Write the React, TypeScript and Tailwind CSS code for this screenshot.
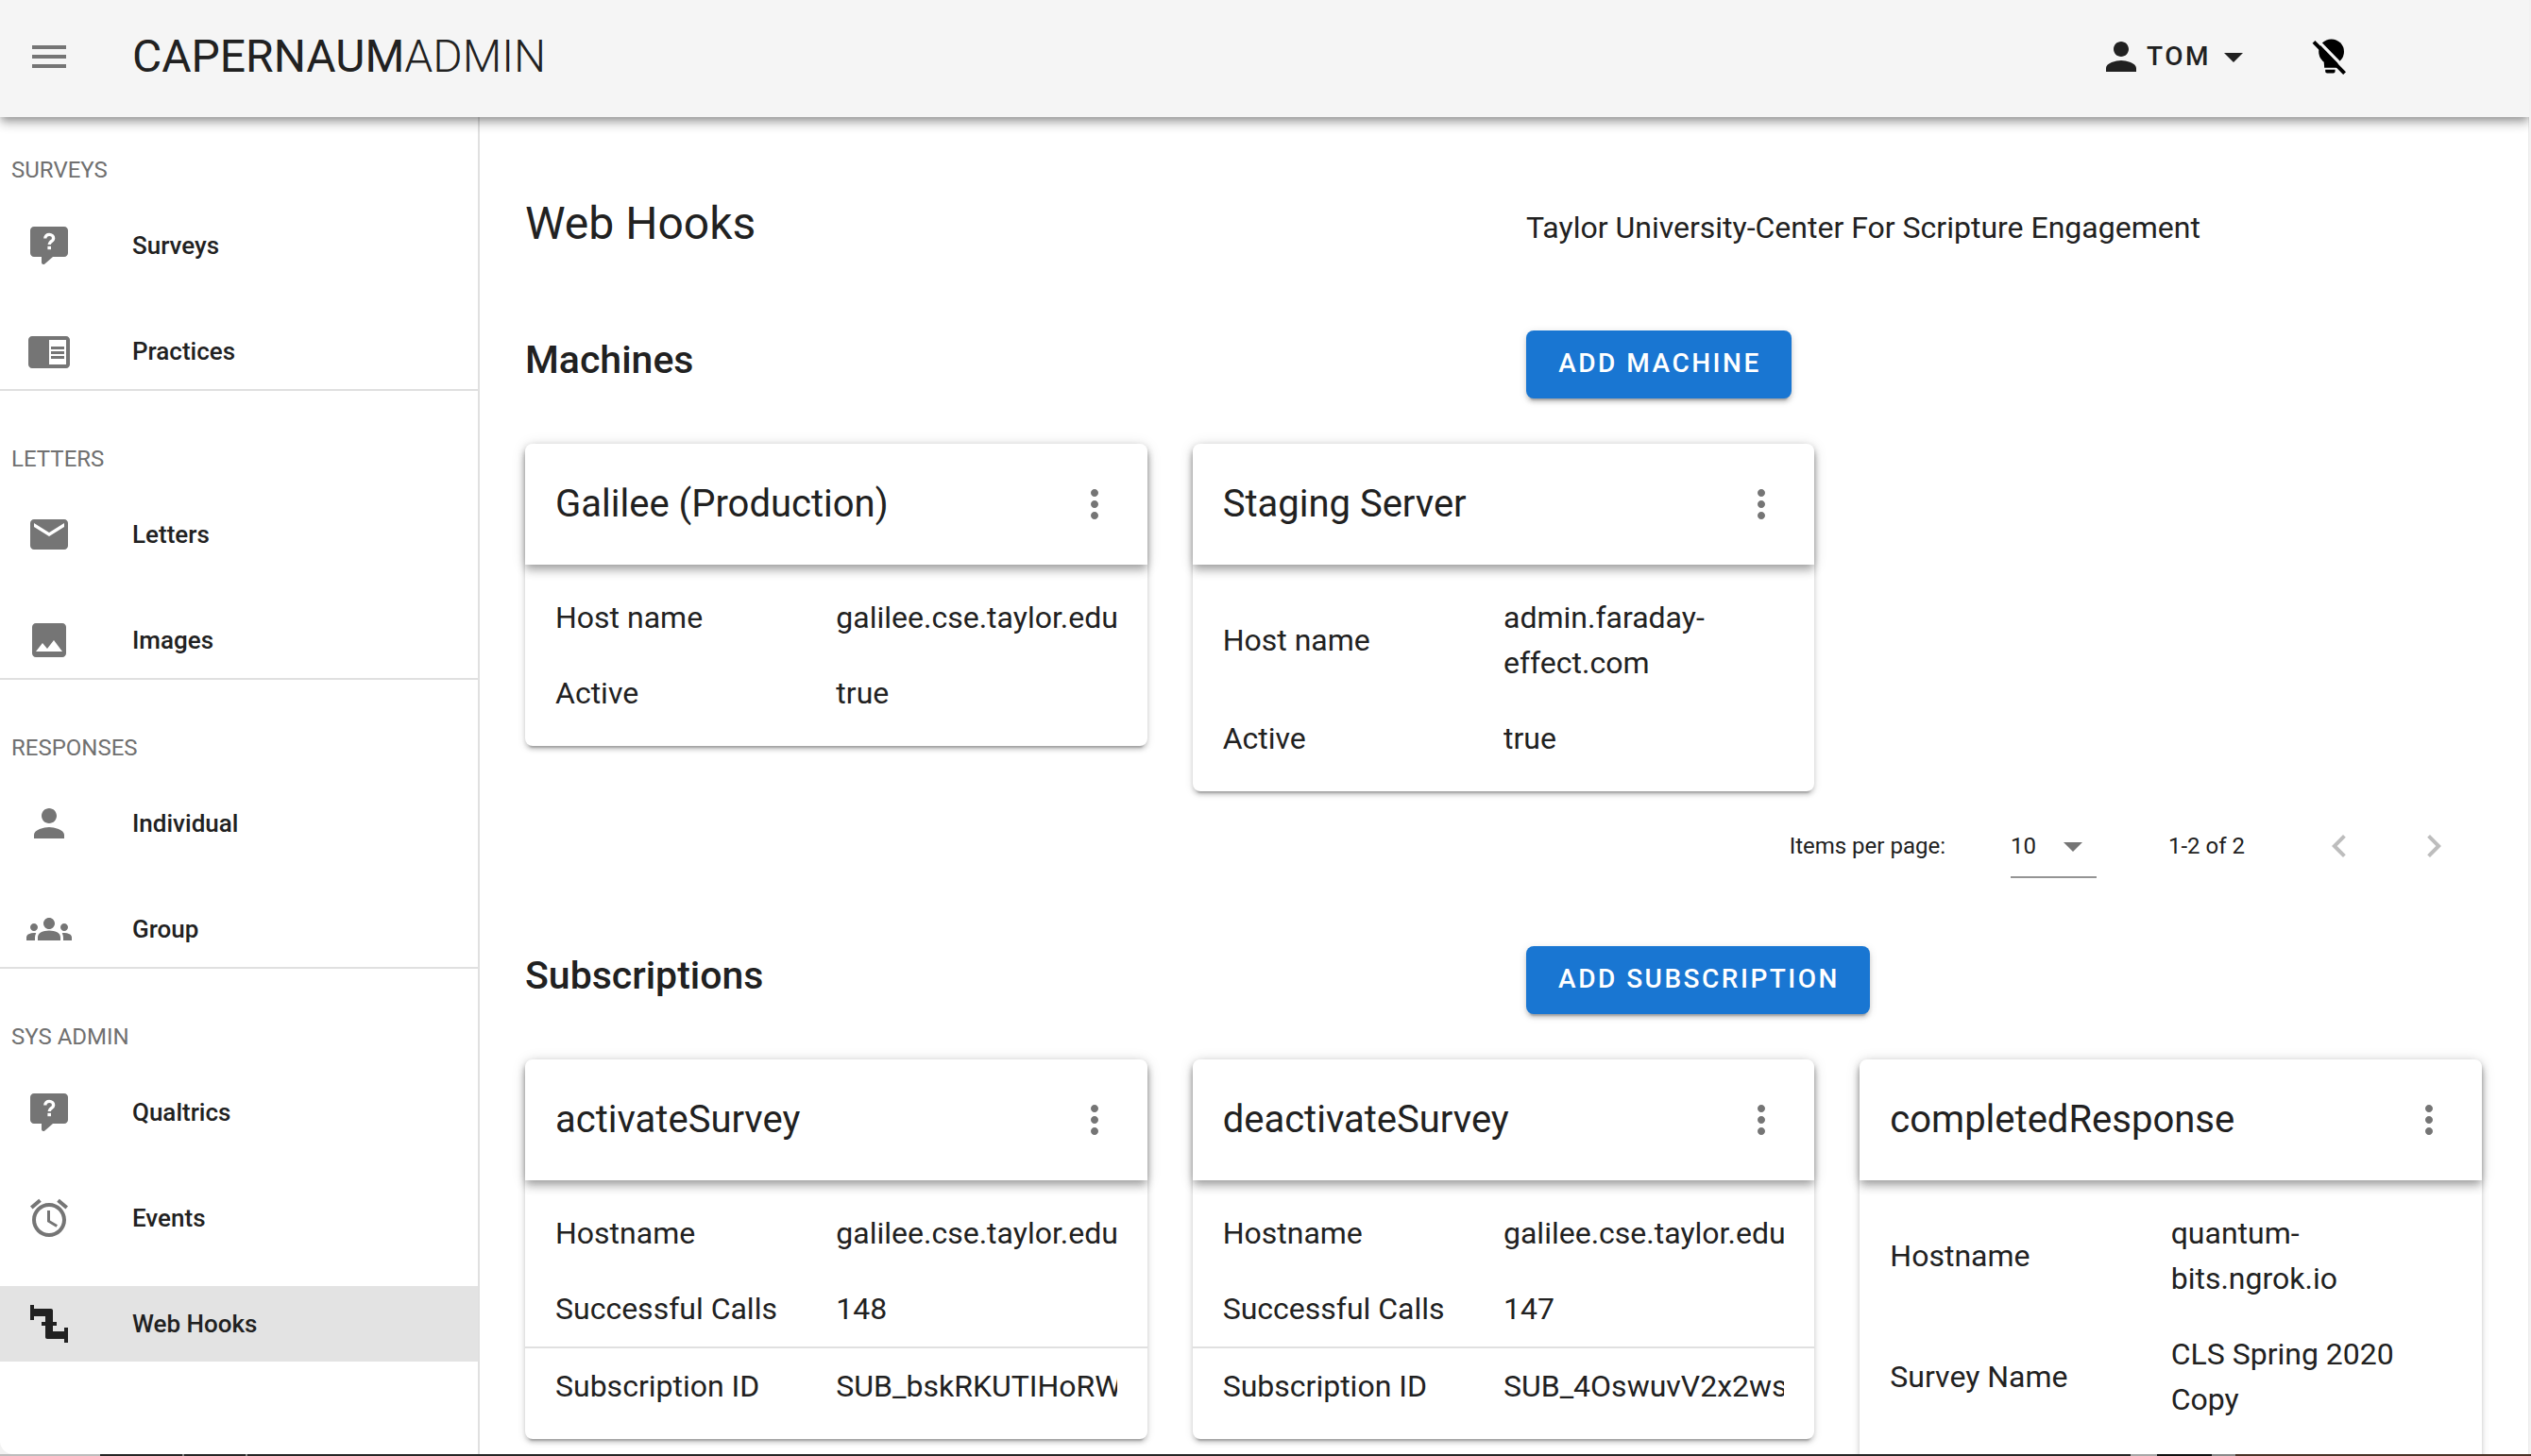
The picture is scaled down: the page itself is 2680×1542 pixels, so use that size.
import type { ReactNode } from "react";

const Icon = ({ d, className = "fill-[#757575]" }: { d: string; className?: string }) => (
  <svg viewBox="0 0 24 24" className={`w-12 h-12 shrink-0 ${className}`}>
    <path d={d} />
  </svg>
);

const paths = {
  menu: "M3 18h18v-2H3v2zm0-5h18v-2H3v2zm0-7v2h18V6H3z",
  practices:
    "M13 12h7v1.5h-7zm0-2.5h7V11h-7zm0 5h7V16h-7zM21 4H3c-1.1 0-2 .9-2 2v13c0 1.1.9 2 2 2h18c1.1 0 2-.9 2-2V6c0-1.1-.9-2-2-2zm0 15h-9V6h9v13z",
  email:
    "M20 4H4c-1.1 0-1.99.9-1.99 2L2 18c0 1.1.9 2 2 2h16c1.1 0 2-.9 2-2V6c0-1.1-.9-2-2-2zm0 4l-8 5-8-5V6l8 5 8-5v2z",
  image:
    "M21 19V5c0-1.1-.9-2-2-2H5c-1.1 0-2 .9-2 2v14c0 1.1.9 2 2 2h14c1.1 0 2-.9 2-2zM8.5 13.5l2.5 3.01L14.5 12l4.5 6H5l3.5-4.5z",
  person:
    "M12 12c2.21 0 4-1.79 4-4s-1.79-4-4-4-4 1.79-4 4 1.79 4 4 4zm0 2c-2.67 0-8 1.34-8 4v2h16v-2c0-2.66-5.33-4-8-4z",
  groups:
    "M12 12.75c1.63 0 3.07.39 4.24.9 1.08.48 1.76 1.56 1.76 2.73V18H6v-1.61c0-1.18.68-2.26 1.76-2.73 1.17-.52 2.61-.91 4.24-.91zM4 13c1.1 0 2-.9 2-2s-.9-2-2-2-2 .9-2 2 .9 2 2 2zm1.13 1.1c-.37-.06-.74-.1-1.13-.1-.99 0-1.93.21-2.78.58C.48 14.9 0 15.62 0 16.43V18h4.5v-1.61c0-.83.23-1.61.63-2.29zM20 13c1.1 0 2-.9 2-2s-.9-2-2-2-2 .9-2 2 .9 2 2 2zm4 3.43c0-.81-.48-1.53-1.22-1.85-.85-.37-1.79-.58-2.78-.58-.39 0-.76.04-1.13.1.4.68.63 1.46.63 2.29V18H24v-1.57zM12 6c1.66 0 3 1.34 3 3s-1.34 3-3 3-3-1.34-3-3 1.34-3 3-3z",
  alarm:
    "M22 5.72l-4.6-3.86-1.29 1.53 4.6 3.86L22 5.72zM7.88 3.39L6.6 1.86 2 5.71l1.29 1.53 4.59-3.85zM12.5 8H11v6l4.75 2.85.75-1.23-4-2.37V8zM12 4c-4.97 0-9 4.03-9 9s4.03 9 9 9c4.97 0 9-4.03 9-9s-4.03-9-9-9zm0 16c-3.87 0-7-3.13-7-7s3.13-7 7-7 7 3.13 7 7-3.13 7-7 7z",
  pipe: "M2 2h2v2h9c.6 0 1 .4 1 1v6h2v2h-2v3h6v-2h2v8h-2v-2h-9c-.6 0-1-.4-1-1v-6H8v-2h2V8H4v2H2V2z",
  more: "M12 8c1.1 0 2-.9 2-2s-.9-2-2-2-2 .9-2 2 .9 2 2 2zm0 2c-1.1 0-2 .9-2 2s.9 2 2 2 2-.9 2-2-.9-2-2-2zm0 6c-1.1 0-2 .9-2 2s.9 2 2 2 2-.9 2-2-.9-2-2-2z",
  caret: "M7 10l5 5 5-5z",
  prev: "M15.41 7.41L14 6l-6 6 6 6 1.41-1.41L10.83 12z",
  next: "M10 6L8.59 7.41 13.17 12l-4.58 4.59L10 18l6-6z",
};

const SurveyIcon = () => (
  <svg viewBox="0 0 24 24" className="w-12 h-12 shrink-0">
    <path
      className="fill-[#757575]"
      d="M4 2h16c1.1 0 2 .9 2 2v12c0 1.1-.9 2-2 2h-6l-4.3 3.7c-.6.5-1.7.3-1.7-.7v-3H4c-1.1 0-2-.9-2-2V4c0-1.1.9-2 2-2z"
    />
    <path d="M9.9 8.3c0-1.4 1-2.1 2.2-2.1s2.2.8 2.2 2c0 1.7-2.2 1.6-2.2 3.3" fill="none" stroke="#fff" strokeWidth="1.7" />
    <path d="M11.2 12.4h1.8v1.7h-1.8z" fill="#fff" />
  </svg>
);

// light bulb with a slash, no matching icon in the packages
const BulbOff = () => (
  <svg viewBox="0 0 24 24" className="w-12 h-12 shrink-0">
    <circle cx="12.8" cy="9.4" r="6.7" fill="#000" />
    <path d="M8.8 14h7.6l-.3 3.9H9.1z" fill="#000" />
    <path d="M9.6 18.9h5.2v.9c0 .6-.4 1-1 1h-3.2c-.6 0-1-.4-1-1z" fill="#000" />
    <path d="M5 2.8l15.6 16" stroke="#f5f5f5" strokeWidth="1.6" fill="none" />
    <path d="M3.5 4.2l16.3 16.6" stroke="#000" strokeWidth="2" fill="none" />
  </svg>
);

const navSections: { title: string; items: { label: string; icon: ReactNode; active?: boolean }[] }[] = [
  {
    title: "SURVEYS",
    items: [
      { label: "Surveys", icon: <SurveyIcon /> },
      { label: "Practices", icon: <Icon d={paths.practices} /> },
    ],
  },
  {
    title: "LETTERS",
    items: [
      { label: "Letters", icon: <Icon d={paths.email} /> },
      { label: "Images", icon: <Icon d={paths.image} /> },
    ],
  },
  {
    title: "RESPONSES",
    items: [
      { label: "Individual", icon: <Icon d={paths.person} /> },
      { label: "Group", icon: <Icon d={paths.groups} /> },
    ],
  },
  {
    title: "SYS ADMIN",
    items: [
      { label: "Qualtrics", icon: <SurveyIcon /> },
      { label: "Events", icon: <Icon d={paths.alarm} /> },
      { label: "Web Hooks", icon: <Icon d={paths.pipe} className="fill-[#212121]" />, active: true },
    ],
  },
];

const Sidebar = () => (
  <aside className="w-[508px] shrink-0 border-r-2 border-[#e0e0e0]">
    {navSections.map((section, i) => (
      <div
        key={section.title}
        className={`${i === 0 ? "pt-[32px]" : "pt-[48px]"} ${i < 3 ? "border-b-2 border-[#e0e0e0]" : ""}`}
      >
        <div className="h-12 flex items-center pl-3 text-[24px] text-[#707070]">{section.title}</div>
        <div className="mt-4 flex flex-col gap-8">
          {section.items.map((item) => (
            <div
              key={item.label}
              className={`h-20 flex items-center pl-7 gap-[64px] text-[26px] font-medium text-[#212121] ${
                item.active ? "bg-[#e3e3e3]" : ""
              }`}
            >
              {item.icon}
              <span>{item.label}</span>
            </div>
          ))}
        </div>
      </div>
    ))}
  </aside>
);

type Row = { label: string; value: string; divider?: boolean };

const Card = ({ title, rows, extra }: { title: string; rows: Row[]; extra?: boolean }) => (
  <div className="bg-white rounded-lg shadow-[0_6px_2px_-4px_rgba(0,0,0,0.2),0_4px_4px_0_rgba(0,0,0,0.14),0_2px_10px_0_rgba(0,0,0,0.12)]">
    <div className="h-32 pl-8 pr-8 flex items-center justify-between bg-white rounded-t-lg shadow-[0_4px_8px_-2px_rgba(0,0,0,0.25),0_8px_10px_0_rgba(0,0,0,0.14),0_2px_16px_0_rgba(0,0,0,0.12)]">
      <span className="text-[40px] text-[#212121]">{title}</span>
      <Icon d={paths.more} />
    </div>
    <div className={`pt-4 ${extra ? "pb-[120px]" : "pb-4"}`}>
      {rows.map((row) => (
        <div
          key={row.label}
          className={`${row.divider ? "border-t-2 border-[#e0e0e0]" : ""} px-8 py-4 grid grid-cols-2 items-center text-[32px] leading-[48px] text-[#212121]`}
        >
          <span>{row.label}</span>
          <span className="overflow-hidden">{row.value}</span>
        </div>
      ))}
    </div>
  </div>
);

const SectionHead = ({ title, button, width }: { title: string; button: string; width: string }) => (
  <div className="grid grid-cols-2 gap-12">
    <h2 className="h-[64px] flex items-center text-[41px] font-medium text-[#212121]">{title}</h2>
    <div>
      <button
        className={`${width} h-[72px] pl-[2px] pb-[2px] rounded-lg bg-[#1976d2] text-white text-[28px] font-medium tracking-[2.5px] shadow-[0_6px_2px_-4px_rgba(0,0,0,0.2),0_4px_4px_0_rgba(0,0,0,0.14),0_2px_10px_0_rgba(0,0,0,0.12)]`}
      >
        {button}
      </button>
    </div>
  </div>
);

const Paginator = () => (
  <div className="mt-[18px] h-20 flex items-center justify-end text-[24px] text-[#212121] pr-[11px]">
    <span>Items per page:</span>
    <div className="relative ml-[69px] w-[91px] h-20 flex items-center">
      <span>10</span>
      <svg viewBox="0 0 24 24" className="w-12 h-12 absolute left-[42px] top-[16px] fill-[#757575]">
        <path d={paths.caret} />
      </svg>
      <div className="absolute left-0 right-0 top-[72px] h-[2px] bg-[#949494]" />
    </div>
    <span className="ml-[76px]">1-2 of 2</span>
    <div className="ml-[60px] w-20 flex justify-center">
      <Icon d={paths.prev} className="fill-[#bdbdbd]" />
    </div>
    <div className="ml-[20px] w-20 flex justify-center">
      <Icon d={paths.next} className="fill-[#bdbdbd]" />
    </div>
  </div>
);

export default function App() {
  return (
    <div className="w-[2680px] h-[1542px] overflow-hidden bg-[#f2f2f2] flex flex-col font-['Roboto',sans-serif]">
      <div className="w-[2678px] h-[1540px] shrink-0 bg-white rounded-bl-[14px] overflow-hidden flex flex-col">
        <header className="relative z-10 h-[124px] shrink-0 bg-[#f5f5f5] flex items-center pl-7 pb-1 pr-[187px] shadow-[0_4px_8px_-2px_rgba(0,0,0,0.3),0_8px_10px_0_rgba(0,0,0,0.14),0_2px_16px_0_rgba(0,0,0,0.12)]">
          <Icon d={paths.menu} />
          <div className="ml-[64px] text-[48px] text-[#212121]">
            CAPERNAUM<span className="font-light">ADMIN</span>
          </div>
          <div className="ml-auto flex items-center text-[28px] font-medium tracking-[2.5px] text-[#212121]">
            <Icon d={paths.person} className="fill-[#212121]" />
            <span className="ml-[3px]">TOM</span>
            <Icon d={paths.caret} className="fill-[#212121]" />
          </div>
          <div className="ml-[54px]">
            <BulbOff />
          </div>
        </header>

        <div className="flex flex-1 min-h-0">
          <Sidebar />
          <main className="flex-1 overflow-hidden pl-12 pr-[49px] border-r border-[#ececec]">
            <div className="mt-[77px] grid grid-cols-2 gap-12">
              <h1 className="h-[72px] flex items-center text-[48px] text-[#212121]">Web Hooks</h1>
              <div className="h-[72px] pt-2 flex items-center text-[32px] text-[#212121]">
                Taylor University-Center For Scripture Engagement
              </div>
            </div>

            <div className="mt-[77px]">
              <SectionHead title="Machines" button="ADD MACHINE" width="w-[281px]" />
            </div>
            <div className="mt-12 grid grid-cols-3 gap-12 items-start">
              <Card
                title="Galilee (Production)"
                rows={[
                  { label: "Host name", value: "galilee.cse.taylor.edu" },
                  { label: "Active", value: "true" },
                ]}
              />
              <Card
                title="Staging Server"
                rows={[
                  { label: "Host name", value: "admin.faraday-effect.com" },
                  { label: "Active", value: "true" },
                ]}
              />
            </div>

            <Paginator />

            <div className="mt-[66px]">
              <SectionHead title="Subscriptions" button="ADD SUBSCRIPTION" width="w-[364px]" />
            </div>
            <div className="mt-12 grid grid-cols-3 gap-12 items-start">
              <Card
                title="activateSurvey"
                rows={[
                  { label: "Hostname", value: "galilee.cse.taylor.edu" },
                  { label: "Successful Calls", value: "148" },
                  { label: "Subscription ID", value: "SUB_bskRKUTIHoRWxTqz", divider: true },
                ]}
              />
              <Card
                title="deactivateSurvey"
                rows={[
                  { label: "Hostname", value: "galilee.cse.taylor.edu" },
                  { label: "Successful Calls", value: "147" },
                  { label: "Subscription ID", value: "SUB_4OswuvV2x2wsRkLm", divider: true },
                ]}
              />
              <Card
                title="completedResponse"
                extra
                rows={[
                  { label: "Hostname", value: "quantum-bits.ngrok.io" },
                  { label: "Survey Name", value: "CLS Spring 2020 Copy" },
                ]}
              />
            </div>
          </main>
        </div>
      </div>

      {/* desktop showing under the window */}
      <div className="h-[2px] shrink-0 flex bg-[#262626]">
        <div className="w-[106px] bg-[#bdbdbd]" />
        <div className="w-[87px]" />
        <div className="w-[2px] bg-[#888888]" />
        <div className="w-[65px]" />
        <div className="w-[2px] bg-[#888888]" />
        <div className="w-[1994px]" />
        <div className="w-[28px] bg-[#a8a8a8]" />
        <div className="w-[58px] bg-[#111111]" />
        <div className="w-[25px] bg-[#8a8a8a]" />
        <div className="flex-1 bg-[#4a3328]" />
      </div>
    </div>
  );
}
